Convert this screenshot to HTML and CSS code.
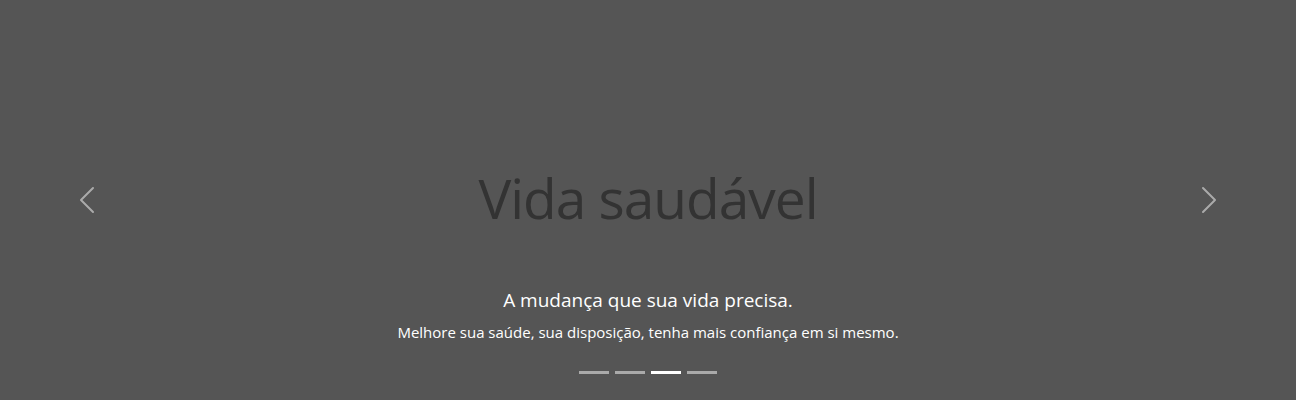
FILE: index.html
```html
<!DOCTYPE html>
<html lang="pt-BR">
<head>
<meta charset="utf-8">
<title>Carousel</title>
<link rel="stylesheet" href="styles.css">
</head>
<body>
<div class="carousel">
  <div class="carousel-item">
    <div class="placeholder">
      <span class="placeholder-text">Vida saudável</span>
    </div>
    <div class="carousel-caption">
      <h5 class="caption-title">A mudança que sua vida precisa.</h5>
      <p class="caption-text">Melhore sua saúde, sua disposição, tenha mais confiança em si mesmo.</p>
    </div>
  </div>
  <div class="carousel-indicators">
    <button class="indicator" type="button"></button>
    <button class="indicator" type="button"></button>
    <button class="indicator active" type="button"></button>
    <button class="indicator" type="button"></button>
  </div>
  <button class="carousel-control prev" type="button" aria-label="Anterior">
    <svg class="control-icon" viewBox="0 0 16 16" width="32" height="32"><path fill="#fff" d="M11.354 1.646a.5.5 0 0 1 0 .708L5.707 8l5.647 5.646a.5.5 0 0 1-.708.708l-6-6a.5.5 0 0 1 0-.708l6-6a.5.5 0 0 1 .708 0z"/></svg>
  </button>
  <button class="carousel-control next" type="button" aria-label="Próximo">
    <svg class="control-icon" viewBox="0 0 16 16" width="32" height="32"><path fill="#fff" d="M4.646 1.646a.5.5 0 0 1 .708 0l6 6a.5.5 0 0 1 0 .708l-6 6a.5.5 0 0 1-.708-.708L10.293 8 4.646 2.354a.5.5 0 0 1 0-.708z"/></svg>
  </button>
</div>
</body>
</html>
```
FILE: styles.css
```css
* { box-sizing: border-box; }
html, body {
  margin: 0;
  padding: 0;
  background: #555;
  font-family: "Open Sans", "Noto Sans", sans-serif;
}
.carousel {
  position: relative;
  width: 100%;
  height: 400px;
  overflow: hidden;
}
.carousel-item {
  position: relative;
  height: 400px;
}
.placeholder {
  height: 400px;
  background: #555;
  display: flex;
  align-items: center;
  justify-content: center;
}
.placeholder-text {
  color: #333;
  font-size: 55px;
  letter-spacing: -1px;
  line-height: 1;
  margin-top: -6px;
}
.carousel-caption {
  position: absolute;
  left: 15%;
  right: 15%;
  bottom: 20px;
  padding: 20px 0;
  text-align: center;
  color: #fff;
}
.caption-title {
  margin: 0 0 8px;
  font-size: 19px;
  font-weight: 400;
  line-height: 24px;
}
.caption-text {
  margin: 0 0 16px;
  font-size: 15px;
  line-height: 24px;
}
.carousel-indicators {
  position: absolute;
  left: 0;
  right: 0;
  bottom: 0;
  margin-bottom: 16px;
  display: flex;
  justify-content: center;
}
.indicator {
  width: 30px;
  height: 23px;
  margin: 0 3px;
  padding: 0;
  border: 0;
  border-top: 10px solid transparent;
  border-bottom: 10px solid transparent;
  background: #fff;
  background-clip: padding-box;
  opacity: .5;
}
.indicator.active { opacity: 1; }
.carousel-control {
  position: absolute;
  top: 0;
  bottom: 0;
  width: 174px;
  display: flex;
  align-items: center;
  justify-content: center;
  background: none;
  border: 0;
  padding: 0;
  opacity: .5;
}
.carousel-control.prev { left: 0; }
.carousel-control.next { right: 0; }
.control-icon { display: block; }
```
